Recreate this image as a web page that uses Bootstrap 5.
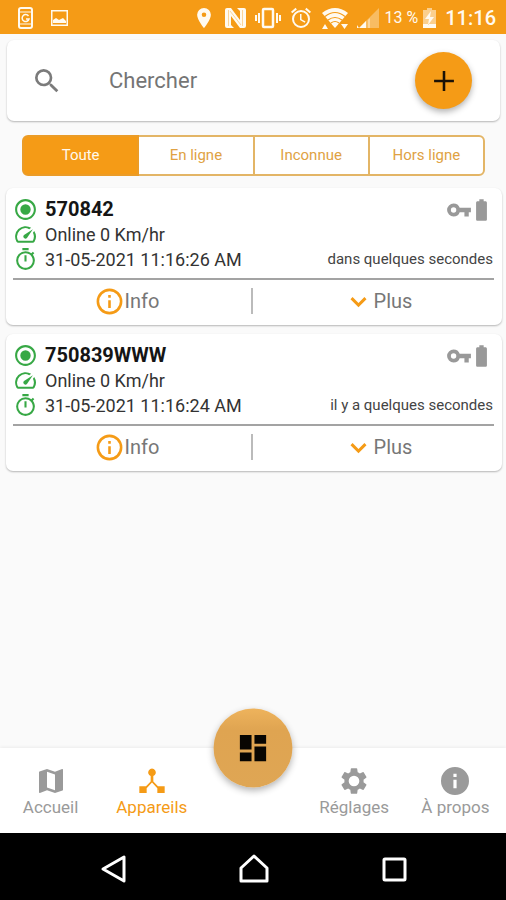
<!DOCTYPE html>
<html lang="fr">
<head>
<meta charset="utf-8">
<meta name="viewport" content="width=device-width, initial-scale=1">
<title>Appareils</title>
<link href="https://cdn.jsdelivr.net/npm/bootstrap@5.3.0/dist/css/bootstrap.min.css" rel="stylesheet">
<style>
:root { --brand: #f59b16; --ok: #37a845; --muted: #9a9a9a; }
body { font-family: Roboto, "Liberation Sans", sans-serif; background: #fafafa; color: #333; }
svg { display: block; flex: none; fill: currentColor; }
.status-bar { background: var(--brand); height: 34px; padding: 2px 10px 0 16px; color: #fffaf0; }
.status-percent { font-size: 16px; line-height: 20px; }
.status-clock { font-size: 20px; line-height: 20px; font-weight: 500; }
.panel { background: #fff; border-radius: 7px; box-shadow: 0 1px 2px rgba(0,0,0,.28); }
.search-panel { margin: 6px 6px 0 7px; padding: 12px 28px 12px 24px; color: #7b7b7b; }
.search-panel .form-control { font-size: 22px; line-height: 28px; color: #666; margin-left: 46px; }
.search-panel .form-control::placeholder { color: #757575; opacity: 1; }
.add-btn { width: 57px; height: 57px; background: var(--brand); color: #1b1206; box-shadow: 0 3px 6px rgba(0,0,0,.3); }
.filters { margin: 14px 21px 0 22px; }
.filters .btn { --bs-btn-color: #e0a243; --bs-btn-bg: #fff; --bs-btn-border-color: #e3b566;
  --bs-btn-active-bg: var(--brand); --bs-btn-active-border-color: #eb9c27; --bs-btn-active-color: #fff8ec;
  --bs-btn-hover-bg: #fff6e6; --bs-btn-hover-color: #e0a243; --bs-btn-hover-border-color: #e3b566;
  --bs-btn-border-width: 2px; --bs-btn-border-radius: 6px;
  flex: 1 1 0; font-size: 15px; line-height: 20px; padding: 8px 0 9px; white-space: nowrap; }
.filters.btn-group > .btn.btn + .btn { margin-left: -2px; }
.devices { margin: 12px 4px 0 6px; gap: 9px; }
.device { padding: 9px 8px 0 7px; }
.device-line { font-size: 18px; line-height: 25px; height: 25px; gap: 7px; }
.device-name { font-size: 20px; font-weight: 700; color: #151515; }
.device-line svg.lead-icon { color: var(--ok); }
.device-line .device-ago { font-size: 15px; color: #444; margin-right: 1px; }
.device-flags { color: #999; gap: 3px; padding-right: 6px; }
.device-actions { border-top: 2px solid #a3a3a3; margin-top: 6px; height: 47px; padding-bottom: 3px; }
.device-actions .btn { flex: 1 1 0; font-size: 20px; line-height: 26px; color: #777; }
.device-actions svg { color: var(--brand); }
.device-actions .info-btn { padding: 0 11px 0 0; }
.device-actions .plus-btn { padding: 0 3px 0 11px; }
.action-rule { width: 2px; height: 26px; background: #bbb; }
.tab-bar { background: #fff; height: 85px; box-shadow: 0 -1px 3px rgba(0,0,0,.06); }
.tab-bar .nav-link { flex: 1 1 0; padding: 17px 0 0; color: var(--muted); font-size: 17px; line-height: 20px; white-space: nowrap; }
.tab-bar .nav-link.active { color: var(--brand); }
.tab-slot { flex: 1 1 0; }
.dash-btn { width: 79px; height: 79px; background: linear-gradient(#eeb35c, #dfa451 28%, #dfa654); color: #080602; box-shadow: 0 3px 7px rgba(0,0,0,.3); }
.system-bar { background: #000; height: 67px; color: #fff; padding: 4px 97px 0 99px; }
</style>
</head>
<body>
<svg class="d-none" xmlns="http://www.w3.org/2000/svg">
  <symbol id="i-target" viewBox="0 0 24 24"><path d="M12 7a5 5 0 100 10 5 5 0 000-10zm0-5C6.480 2 2 6.480 2 12s4.480 10 10 10 10-4.480 10-10S17.520 2 12 2zm0 18c-4.420 0-8-3.580-8-8s3.580-8 8-8 8 3.580 8 8-3.580 8-8 8z"/></symbol>
  <symbol id="i-speed" viewBox="0 0 24 24"><path d="M20.380 8.570l-1.230 1.850a8 8 0 01-.22 7.580H5.070A8 8 0 0115.580 6.850l1.850-1.230A10 10 0 003.350 19a2 2 0 001.720 1h13.850a2 2 0 001.740-1 10 10 0 00-.27-10.440zm-9.790 6.840a2 2 0 002.830 0l5.660-8.490-8.490 5.660a2 2 0 000 2.830z"/></symbol>
  <symbol id="i-timer" viewBox="0 0 24 24"><path d="M15 1H9v2h6V1zm-4 13h2V8h-2v6zm8.030-6.610l1.420-1.420c-.43-.51-.9-.99-1.410-1.410l-1.420 1.420A8.960 8.960 0 0012 4a9 9 0 109 9c0-2.120-.74-4.070-1.970-5.610zM12 20c-3.870 0-7-3.130-7-7s3.130-7 7-7 7 3.130 7 7-3.130 7-7 7z"/></symbol>
  <symbol id="i-key" viewBox="0 0 24 24"><path d="M12.650 10A6 6 0 007 6a6 6 0 000 12 6 6 0 005.650-4H17v4h4v-4h2v-4H12.650zM7 14.500a2.500 2.500 0 110-5 2.500 2.500 0 010 5z"/></symbol>
  <symbol id="i-battery" viewBox="6 1 12 22"><path d="M15.670 4H14V2h-4v2H8.330C7.600 4 7 4.600 7 5.330v15.330C7 21.400 7.600 22 8.330 22h7.330c.74 0 1.340-.6 1.340-1.330V5.330C17 4.600 16.400 4 15.670 4z"/></symbol>
  <symbol id="i-info" viewBox="0 0 24 24"><path d="M11 7h2v2h-2zm0 4h2v6h-2zm1-9a10 10 0 100 20 10 10 0 000-20zm0 18a8 8 0 110-16 8 8 0 010 16z"/></symbol>
  <symbol id="i-chevron" viewBox="0 0 24 24"><path d="M7.410 8.590L12 13.170l4.590-4.580L18.200 10.200l-6.200 6.200-6.200-6.200z"/></symbol>
</svg>

<div class="d-flex flex-column min-vh-100">
  <header class="status-bar d-flex align-items-center">
    <svg width="18" height="24" viewBox="0 0 18 24"><g fill="none" stroke="currentColor"><rect x="3" y="2" width="13" height="20" rx="2" stroke-width="2"/><path d="M3 6h13M3 18h13" stroke-width="1"/><path d="M12.500 10a3.500 3.500 0 10.500 3H10" stroke-width="1.500"/></g></svg>
    <svg class="ms-3" width="18" height="18" viewBox="0 0 18 18"><path d="M1 1h17v16H1zM2.500 2.500v13h14v-13z" fill-rule="evenodd"/><path d="M3 14v-3l3-2 3 2 4-2 3 3v2z"/></svg>
    <div class="ms-auto d-flex align-items-center">
      <svg width="24" height="22" viewBox="0 0 24 24"><path d="M12 1a7.500 7.500 0 00-7.500 7.500C4.500 14 12 23 12 23s7.500-9 7.500-14.500A7.500 7.500 0 0012 1zm0 10a2.500 2.500 0 110-5 2.500 2.500 0 010 5z"/></svg>
      <svg class="ms-2" width="23" height="22" viewBox="0 0 23 22"><path d="M3 1h4l9 12V4l-3-3h7q2 0 2 2v16q0 2-2 2h-4L7 9v9l3 3H3q-2 0-2-2V3q0-2 2-2z"/><path d="M4.500 3v16M18.500 3v16M6 4l11 14" fill="none" stroke="#f59b16" stroke-width="1" opacity=".4"/></svg>
      <svg class="ms-2" width="26" height="22" viewBox="0 0 26 22"><path d="M0 8h2v6H0zm3-2h2v10H3zm18 0h2v10h-2zm3 2h2v6h-2z"/><rect x="8" y="2" width="10" height="18" rx="1" fill="none" stroke="currentColor" stroke-width="2.500"/></svg>
      <svg class="ms-2" width="24" height="22" viewBox="1 1 22 22"><path d="M22 5.720l-4.600-3.860-1.290 1.530 4.600 3.860L22 5.720zM7.880 3.390L6.600 1.860 2 5.710l1.290 1.530 4.590-3.850zM12.500 8H11v6l4.750 2.850.75-1.230-4-2.370V8zM12 4a9 9 0 100 18 9 9 0 000-18zm0 16a7 7 0 110-14 7 7 0 010 14z"/></svg>
      <svg class="ms-2" width="28" height="24" viewBox="0 0 28 24"><path d="M1 7Q14-3 27 7L14 22z"/><path d="M4 10.500q10-8 20 0M7 14q7-5 14 0M10 17q4-3 8 0" fill="none" stroke="#f59b16" stroke-width="1.200"/><path d="M1 23l3-5 3 5zm19-5h7l-3.500 5z"/></svg>
      <svg class="ms-2" width="24" height="22" viewBox="0 0 24 22"><path d="M22 1v20H2z" opacity=".35"/><path d="M9 14v7H2zM0 21v-3l2 3z"/><path d="M13 11v10h-2V13z" opacity=".4"/></svg>
      <span class="status-percent ms-1">13 %</span>
      <svg class="ms-1" width="15" height="22" viewBox="0 0 15 22"><path d="M5 1h5v2h4v14H1V3h4z" opacity=".55"/><path d="M1 17h13v4H1zM9 4l-6 8h4l-1 6 6-8H8z"/></svg>
      <span class="status-clock ms-2">11:16</span>
    </div>
  </header>

  <main class="flex-grow-1">
    <form class="panel search-panel d-flex align-items-center" role="search">
      <label for="search" aria-label="Chercher"><svg width="32" height="32" viewBox="0 0 24 24"><path d="M15.500 14h-.79l-.28-.27A6.470 6.470 0 0016 9.500 6.500 6.500 0 109.500 16c1.610 0 3.090-.59 4.230-1.570l.27.280v.79l5 4.990L20.490 19l-4.990-5zm-6 0a4.500 4.500 0 110-9 4.500 4.500 0 010 9z"/></svg></label>
      <input id="search" type="text" class="form-control border-0 bg-transparent p-0" placeholder="Chercher">
      <button type="button" class="add-btn btn rounded-circle p-0 border-0 d-flex align-items-center justify-content-center flex-shrink-0" aria-label="Ajouter"><svg width="34" height="34" viewBox="0 0 24 24"><path d="M19 12.900h-6.100V19h-1.800v-6.100H5v-1.800h6.100V5h1.800v6.100H19z"/></svg></button>
    </form>

    <div class="filters btn-group d-flex" role="group" aria-label="Filtre">
      <button type="button" class="btn active">Toute</button>
      <button type="button" class="btn">En ligne</button>
      <button type="button" class="btn">Inconnue</button>
      <button type="button" class="btn">Hors ligne</button>
    </div>

    <div class="devices d-flex flex-column">
      <article class="panel device">
        <div class="device-line d-flex align-items-center">
          <svg class="lead-icon" width="25" height="25"><use href="#i-target"/></svg>
          <span class="device-name">570842</span>
          <span class="device-flags ms-auto d-flex align-items-center"><svg width="26" height="26"><use href="#i-key"/></svg><svg width="13" height="24"><use href="#i-battery"/></svg></span>
        </div>
        <div class="device-line d-flex align-items-center"><svg class="lead-icon" width="25" height="25"><use href="#i-speed"/></svg><span>Online 0 Km/hr</span></div>
        <div class="device-line d-flex align-items-center"><svg class="lead-icon" width="25" height="25"><use href="#i-timer"/></svg><span>31-05-2021 11:16:26 AM</span><span class="device-ago ms-auto">dans quelques secondes</span></div>
        <div class="device-actions d-flex align-items-center">
          <button type="button" class="info-btn btn border-0 d-flex align-items-center justify-content-center"><svg width="31" height="31"><use href="#i-info"/></svg>Info</button>
          <span class="action-rule"></span>
          <button type="button" class="plus-btn btn border-0 d-flex align-items-center justify-content-center"><svg width="31" height="31"><use href="#i-chevron"/></svg>Plus</button>
        </div>
      </article>

      <article class="panel device">
        <div class="device-line d-flex align-items-center">
          <svg class="lead-icon" width="25" height="25"><use href="#i-target"/></svg>
          <span class="device-name">750839WWW</span>
          <span class="device-flags ms-auto d-flex align-items-center"><svg width="26" height="26"><use href="#i-key"/></svg><svg width="13" height="24"><use href="#i-battery"/></svg></span>
        </div>
        <div class="device-line d-flex align-items-center"><svg class="lead-icon" width="25" height="25"><use href="#i-speed"/></svg><span>Online 0 Km/hr</span></div>
        <div class="device-line d-flex align-items-center"><svg class="lead-icon" width="25" height="25"><use href="#i-timer"/></svg><span>31-05-2021 11:16:24 AM</span><span class="device-ago ms-auto">il y a quelques secondes</span></div>
        <div class="device-actions d-flex align-items-center">
          <button type="button" class="info-btn btn border-0 d-flex align-items-center justify-content-center"><svg width="31" height="31"><use href="#i-info"/></svg>Info</button>
          <span class="action-rule"></span>
          <button type="button" class="plus-btn btn border-0 d-flex align-items-center justify-content-center"><svg width="31" height="31"><use href="#i-chevron"/></svg>Plus</button>
        </div>
      </article>
    </div>
  </main>

  <nav class="tab-bar nav flex-nowrap position-relative">
    <a href="#" class="nav-link d-flex flex-column align-items-center"><svg width="32" height="32" viewBox="0 0 24 24"><path d="M20.500 3l-.16.030L15 5.100 9 3 3.360 4.900a.5.5 0 00-.36.480V20.500c0 .28.220.5.500.5l.16-.03L9 18.900l6 2.100 5.640-1.900a.5.5 0 00.36-.48V3.500a.5.5 0 00-.5-.5zM15 19l-6-2.110V5l6 2.110V19z"/></svg>Accueil</a>
    <a href="#" class="nav-link active d-flex flex-column align-items-center" aria-current="page"><svg width="32" height="32" viewBox="0 0 24 24"><path d="M16.500 16L13 12.300V8.300a2.900 2.900 0 10-2 0v4L7.500 16H2.500v5h5.500v-3.600l4-4.200 4 4.200V21h5.500v-5z"/></svg>Appareils</a>
    <span class="tab-slot"></span>
    <a href="#" class="nav-link d-flex flex-column align-items-center"><svg width="32" height="32" viewBox="0 0 24 24"><path d="M19.140 12.940c.04-.3.060-.61.060-.94 0-.32-.02-.64-.07-.94l2.030-1.580a.49.490 0 00.12-.61l-1.920-3.320a.488.488 0 00-.59-.22l-2.390.96c-.5-.38-1.030-.7-1.620-.94l-.36-2.540a.484.484 0 00-.48-.41h-3.840c-.24 0-.43.170-.47.410l-.36 2.540c-.59.240-1.130.57-1.620.94l-2.390-.96c-.22-.08-.47 0-.59.220L2.740 8.870c-.12.210-.08.470.12.610l2.030 1.580c-.05.300-.09.630-.09.940s.02.640.070.940l-2.030 1.580a.49.490 0 00-.12.610l1.920 3.320c.12.220.37.290.59.220l2.390-.96c.5.380 1.030.7 1.620.94l.36 2.540c.05.240.24.410.48.410h3.840c.24 0 .44-.17.470-.41l.36-2.540c.59-.24 1.130-.56 1.620-.94l2.390.96c.22.080.47 0 .59-.22l1.920-3.320c.12-.22.070-.47-.12-.61l-2.010-1.580zM12 16a4 4 0 110-8 4 4 0 010 8z"/></svg>Réglages</a>
    <a href="#" class="nav-link d-flex flex-column align-items-center"><svg width="32" height="32" viewBox="0 0 24 24"><path d="M12 1.500a10.500 10.500 0 100 21 10.500 10.500 0 000-21zM13.200 17.500h-2.400V11h2.400v6.500zm0-8.500h-2.400V6.600h2.400V9z"/></svg>À propos</a>
    <button type="button" class="dash-btn btn rounded-circle border-0 p-0 d-flex align-items-center justify-content-center position-absolute top-0 start-50 translate-middle" aria-label="Tableau de bord"><svg width="35" height="35" viewBox="0 0 24 24"><path d="M3 13h8V3H3v10zm0 8h8v-6H3v6zm10 0h8V11h-8v10zm0-18v6h8V3h-8z"/></svg></button>
  </nav>

  <footer class="system-bar d-flex align-items-center justify-content-between">
    <svg width="30" height="30" viewBox="0 0 30 30"><path d="M25 3v24L4 15z" fill="none" stroke="currentColor" stroke-width="3" stroke-linejoin="round"/></svg>
    <svg width="30" height="30" viewBox="0 0 30 30"><path d="M2 27V14L15 2l13 12v13z" fill="none" stroke="currentColor" stroke-width="3" stroke-linejoin="round"/></svg>
    <svg width="30" height="30" viewBox="0 0 30 30"><rect x="5" y="5" width="21" height="21" rx="1" fill="none" stroke="currentColor" stroke-width="3"/></svg>
  </footer>
</div>
<script src="https://cdn.jsdelivr.net/npm/bootstrap@5.3.0/dist/js/bootstrap.bundle.min.js"></script>
</body>
</html>
